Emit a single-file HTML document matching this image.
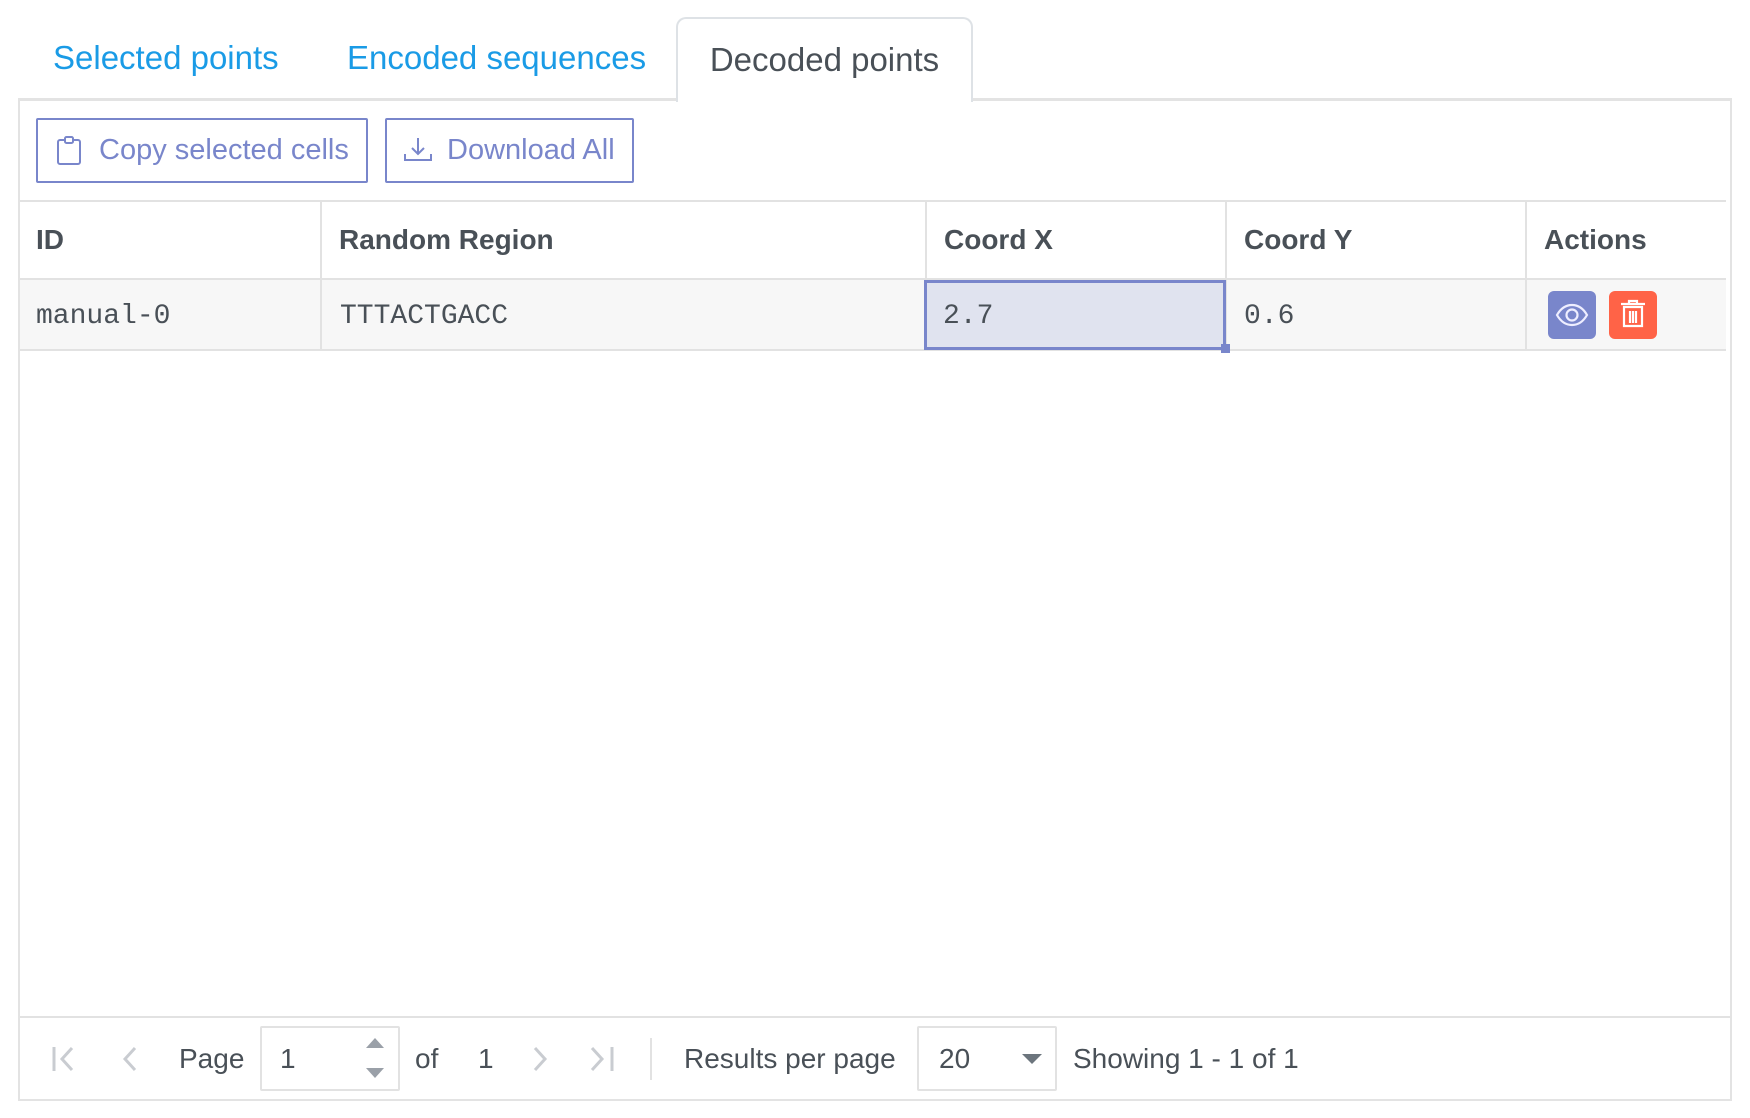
<!DOCTYPE html>
<html><head><meta charset="utf-8"><style>
*{box-sizing:border-box;margin:0;padding:0}
body{width:1750px;height:1118px;background:#fff;font-family:"Liberation Sans",sans-serif;position:relative;overflow:hidden;color:#495057}
.abs{position:absolute}
.tab{position:absolute;top:17px;height:82px;line-height:82px;font-size:33px;color:#1a9be6}
.active{left:676px;width:297px;border:2px solid #dee2e6;border-bottom:none;border-radius:10px 10px 0 0;background:#fff;color:#495057;text-align:center;height:85px;z-index:2}
.box{left:18px;top:98px;width:1714px;height:1003px;border:2px solid #e3e3e3;border-top:3px solid #e3e3e3}
.btn{position:absolute;top:118px;height:65px;border:2px solid #7986cb;color:#7986cb;font-size:29px;line-height:61px;border-radius:2px}
.hl{position:absolute;background:#e2e2e2;height:2px}
.vl{position:absolute;background:#e2e2e2;width:2px}
.th{position:absolute;top:224px;font-size:28px;font-weight:bold;color:#495057}
.td{position:absolute;top:301px;font-size:28px;font-family:"Liberation Mono","DejaVu Sans Mono",monospace;color:#495057}
.pg{position:absolute;top:1043px;font-size:28px;color:#495057}
</style></head><body>
<div class="tab" style="left:53px">Selected points</div>
<div class="tab" style="left:347px">Encoded sequences</div>
<div class="tab active">Decoded points</div>
<div class="abs box"></div>

<div class="btn" style="left:36px;width:332px"><svg class="abs" style="left:18px;top:16px" width="26" height="30" viewBox="0 0 26 30" fill="none" stroke="#7986cb" stroke-width="2"><rect x="2" y="4" width="22" height="24" rx="2"/><rect x="9" y="1" width="8" height="6" rx="1.5" fill="#fff"/></svg><span class="abs" style="left:61px">Copy selected cells</span></div>
<div class="btn" style="left:385px;width:249px"><svg class="abs" style="left:16px;top:16px" width="30" height="28" viewBox="0 0 30 28" fill="none" stroke="#7986cb" stroke-width="2"><path d="M15 2v16M9 12l6 6 6-6M2 18v6h26v-6"/></svg><span class="abs" style="left:60px">Download All</span></div>

<div class="hl" style="left:20px;top:200px;width:1706px"></div>
<div class="hl" style="left:20px;top:278px;width:1706px"></div>
<div class="abs" style="left:20px;top:280px;width:1706px;height:70px;background:#f7f7f7"></div>
<div class="hl" style="left:20px;top:349px;width:1706px"></div>
<div class="vl" style="left:320px;top:201px;height:149px"></div>
<div class="vl" style="left:925px;top:201px;height:149px"></div>
<div class="vl" style="left:1225px;top:201px;height:149px"></div>
<div class="vl" style="left:1525px;top:201px;height:149px"></div>

<div class="th" style="left:36px">ID</div>
<div class="th" style="left:339px">Random Region</div>
<div class="th" style="left:944px">Coord X</div>
<div class="th" style="left:1244px">Coord Y</div>
<div class="th" style="left:1544px">Actions</div>

<div class="abs" style="left:924px;top:280px;width:302px;height:70px;background:#e0e3ef;border:3px solid #7986cb"></div>
<div class="abs" style="left:1221px;top:344px;width:9px;height:9px;background:#7986cb"></div>
<div class="td" style="left:36px">manual-0</div>
<div class="td" style="left:340px">TTTACTGACC</div>
<div class="td" style="left:943px">2.7</div>
<div class="td" style="left:1244px">0.6</div>

<div class="abs" style="left:1548px;top:291px;width:48px;height:48px;background:#7986cb;border-radius:6px"><svg width="48" height="48" viewBox="0 0 48 48" fill="none" stroke="#eef" stroke-width="2.2"><path d="M9 24c4-7 9-10 15-10s11 3 15 10c-4 7-9 10-15 10s-11-3-15-10z"/><circle cx="24" cy="24" r="5.5"/></svg></div>
<div class="abs" style="left:1609px;top:291px;width:48px;height:48px;background:#ff6347;border-radius:6px"><svg width="48" height="48" viewBox="0 0 48 48" fill="none" stroke="#fff" stroke-width="2.2"><path d="M12 13h24M20 13v-3h8v3M15 16h18v19h-18zM21 20v12M24 20v12M27 20v12"/></svg></div>

<div class="hl" style="left:20px;top:1016px;width:1710px"></div>
<svg class="abs" style="left:50px;top:1044px" width="30" height="30" viewBox="0 0 30 30" fill="none" stroke="#c9ccd1" stroke-width="3"><path d="M4 3v24M22 4l-10 11 10 11"/></svg>
<svg class="abs" style="left:120px;top:1044px" width="20" height="30" viewBox="0 0 20 30" fill="none" stroke="#c9ccd1" stroke-width="3"><path d="M15 4l-10 11 10 11"/></svg>
<div class="pg" style="left:179px">Page</div>
<div class="abs" style="left:260px;top:1026px;width:140px;height:65px;border:2px solid #e2e2e2;border-radius:2px"></div>
<div class="pg" style="left:280px">1</div>
<div class="abs" style="left:366px;top:1038px;width:0;height:0;border-left:9px solid transparent;border-right:9px solid transparent;border-bottom:10px solid #9aa0a8"></div>
<div class="abs" style="left:366px;top:1068px;width:0;height:0;border-left:9px solid transparent;border-right:9px solid transparent;border-top:10px solid #9aa0a8"></div>
<div class="pg" style="left:415px">of</div>
<div class="pg" style="left:478px">1</div>
<svg class="abs" style="left:530px;top:1044px" width="20" height="30" viewBox="0 0 20 30" fill="none" stroke="#c9ccd1" stroke-width="3"><path d="M5 4l10 11-10 11"/></svg>
<svg class="abs" style="left:588px;top:1044px" width="30" height="30" viewBox="0 0 30 30" fill="none" stroke="#c9ccd1" stroke-width="3"><path d="M4 4l10 11-10 11M24 3v24"/></svg>
<div class="vl" style="left:650px;top:1038px;height:42px"></div>
<div class="pg" style="left:684px">Results per page</div>
<div class="abs" style="left:917px;top:1026px;width:140px;height:65px;border:2px solid #e2e2e2;border-radius:2px"></div>
<div class="pg" style="left:939px">20</div>
<div class="abs" style="left:1022px;top:1054px;width:0;height:0;border-left:10px solid transparent;border-right:10px solid transparent;border-top:10px solid #6c757d"></div>
<div class="pg" style="left:1073px">Showing 1 - 1 of 1</div>
</body></html>
